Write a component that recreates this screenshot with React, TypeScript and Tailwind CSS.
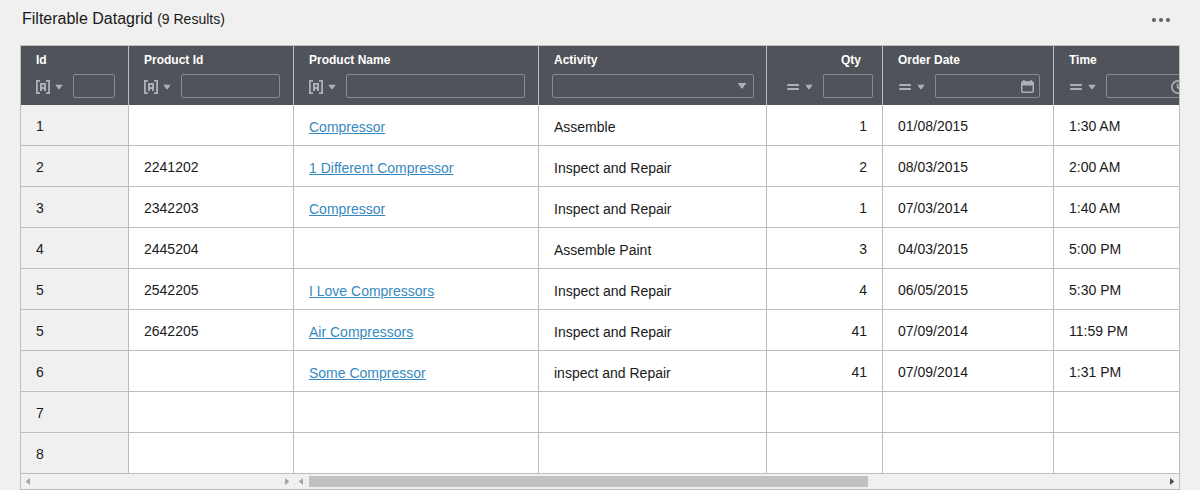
import React from "react";

type Row = {
  id: string;
  product?: string;
  name?: string;
  activity?: string;
  qty?: string;
  date?: string;
  time?: string;
};

const rows: Row[] = [
  { id: "1", name: "Compressor", activity: "Assemble", qty: "1", date: "01/08/2015", time: "1:30 AM" },
  { id: "2", product: "2241202", name: "1 Different Compressor", activity: "Inspect and Repair", qty: "2", date: "08/03/2015", time: "2:00 AM" },
  { id: "3", product: "2342203", name: "Compressor", activity: "Inspect and Repair", qty: "1", date: "07/03/2014", time: "1:40 AM" },
  { id: "4", product: "2445204", activity: "Assemble Paint", qty: "3", date: "04/03/2015", time: "5:00 PM" },
  { id: "5", product: "2542205", name: "I Love Compressors", activity: "Inspect and Repair", qty: "4", date: "06/05/2015", time: "5:30 PM" },
  { id: "5", product: "2642205", name: "Air Compressors", activity: "Inspect and Repair", qty: "41", date: "07/09/2014", time: "11:59 PM" },
  { id: "6", name: "Some Compressor", activity: "inspect and Repair", qty: "41", date: "07/09/2014", time: "1:31 PM" },
  { id: "7" },
  { id: "8" },
];

const grid = "grid grid-cols-[108px_165px_245px_228px_116px_171px_125px]";
const box = "h-6 shrink-0 rounded-[2px] border border-[#888b94]";

function Caret() {
  return (
    <svg className="ml-[5px] shrink-0" width="8" height="6" viewBox="0 0 8 6" fill="#adb0b8">
      <path d="M.2 .8h7.6L4.5 5.2h-1z" />
    </svg>
  );
}

function ContainsIcon() {
  return (
    <svg className="shrink-0" width="14" height="14" viewBox="0 0 14 14" fill="none" stroke="#adb0b8">
      <path strokeWidth="1.8" d="M4 .9H.9v12.2H4M10 .9h3.1v12.2H10" />
      <path strokeWidth="2" d="M5 11V4h4v7M5 8h4" />
    </svg>
  );
}

function EqualsIcon() {
  return (
    <svg className="mx-px shrink-0" width="12" height="6" viewBox="0 0 12 6" fill="#adb0b8">
      <rect width="12" height="2" rx=".4" />
      <rect y="4" width="12" height="2" rx=".4" />
    </svg>
  );
}

function CalendarIcon() {
  return (
    <svg className="mt-px" width="13" height="13" viewBox="0 0 13 13" fill="none" stroke="#adb0b8">
      <path strokeWidth="1.6" d="M3 0v3M10 0v3" />
      <rect x=".75" y="2" width="11.5" height="10.2" rx="1" strokeWidth="1.5" />
      <path strokeWidth="4" d="M.7 3.5h11.6" />
    </svg>
  );
}

function ClockIcon() {
  return (
    <svg className="mt-px" width="14" height="14" viewBox="0 0 14 14" fill="none" stroke="#adb0b8" strokeWidth="1.7">
      <circle cx="7" cy="7" r="6.1" />
      <path d="M6.6 3.5v3.8L9.4 9.5" />
    </svg>
  );
}

function HeaderCell({ title, right, last, children }: { title: string; right?: boolean; last?: boolean; children: React.ReactNode }) {
  return (
    <div className={`h-[59px] min-w-0 overflow-hidden bg-[#50535a] pt-1.5 ${last ? "" : "border-r border-[#bdbdbd]"}`}>
      <div className={`text-[12px] leading-4 font-bold text-white ${right ? "pr-[21px] text-right" : "pl-[15px]"}`}>{title}</div>
      <div className="mt-1.5 flex items-center">{children}</div>
    </div>
  );
}

function TextOperator() {
  return (
    <div className="flex shrink-0 items-center pt-[2px] pr-[10px] pl-[15px]">
      <ContainsIcon />
      <Caret />
    </div>
  );
}

function EqualsOperator({ number }: { number?: boolean }) {
  return (
    <div className={`flex shrink-0 items-center pt-[2px] pr-[10px] ${number ? "pl-[19px]" : "pl-[15px]"}`}>
      <EqualsIcon />
      <Caret />
    </div>
  );
}

function Cell({ children, className = "", last }: { children?: React.ReactNode; className?: string; last?: boolean }) {
  return (
    <div className={`h-[41px] min-w-0 overflow-hidden border-b border-[#bdbdbd] px-[15px] pt-[11px] leading-5 whitespace-nowrap ${last ? "" : "border-r"} ${className}`}>
      {children}
    </div>
  );
}

function ScrollArrow({ left, dark }: { left?: boolean; dark?: boolean }) {
  return (
    <svg className="shrink-0" width="4" height="7" viewBox="0 0 4 7" fill={dark ? "#505050" : "#a3a3a3"}>
      <path d={left ? "M4 0v7L0 3.8v-.6z" : "M0 0v7l4-3.2v-.6z"} />
    </svg>
  );
}

export default function App() {
  return (
    <div className="flex h-[490px] w-[1200px] flex-col overflow-hidden bg-[#f0f0f0] px-5 font-['Liberation_Sans',sans-serif] text-[14px] text-[#1a1a1a]">
      <header className="flex h-[45px] shrink-0 items-start justify-between pr-[10px] pl-[2px]">
        <h1 className="pt-[7px] text-[16px] leading-6">
          Filterable Datagrid <span className="text-[14px]">(9 Results)</span>
        </h1>
        <svg className="mt-[18px]" width="18" height="4" viewBox="0 0 18 4" fill="#606060">
          <circle cx="2" cy="2" r="2" />
          <circle cx="9" cy="2" r="2" />
          <circle cx="16" cy="2" r="2" />
        </svg>
      </header>

      <main className="h-[445px] w-[1160px] overflow-hidden border border-[#bdbdbd]">
        <div className={grid}>
          <HeaderCell title="Id">
            <TextOperator />
            <div className={`${box} w-[42px]`} />
          </HeaderCell>
          <HeaderCell title="Product Id">
            <TextOperator />
            <div className={`${box} w-[99px]`} />
          </HeaderCell>
          <HeaderCell title="Product Name">
            <TextOperator />
            <div className={`${box} w-[179px]`} />
          </HeaderCell>
          <HeaderCell title="Activity">
            <div className={`${box} ml-[13px] flex w-[202px] items-center justify-end pr-[6px]`}>
              <svg width="10" height="6" viewBox="0 0 10 6" fill="#adb0b8">
                <path d="M.6 0h8.8L5.5 5.6h-1z" />
              </svg>
            </div>
          </HeaderCell>
          <HeaderCell title="Qty" right>
            <EqualsOperator number />
            <div className={`${box} w-[50px]`} />
          </HeaderCell>
          <HeaderCell title="Order Date">
            <EqualsOperator />
            <div className={`${box} flex w-[105px] items-center justify-end pr-[5px]`}>
              <CalendarIcon />
            </div>
          </HeaderCell>
          <HeaderCell title="Time" last>
            <EqualsOperator />
            <div className={`${box} flex w-[85px] items-center justify-end pr-[5px]`}>
              <ClockIcon />
            </div>
          </HeaderCell>
        </div>

        {rows.map((row, i) => (
          <div key={i} className={`${grid} bg-white`}>
            <Cell className="bg-[#f0f0f0]">{row.id}</Cell>
            <Cell>{row.product}</Cell>
            <Cell className="pt-[12px]">
              {row.name && <a className="text-[#368ac0] underline">{row.name}</a>}
            </Cell>
            <Cell className="pt-[12px]">{row.activity}</Cell>
            <Cell className="text-right">{row.qty}</Cell>
            <Cell>{row.date}</Cell>
            <Cell last>{row.time}</Cell>
          </div>
        ))}

        <div className="flex h-[15px] items-center bg-[#f0f0f0]">
          <div className="flex w-[273px] shrink-0 items-center justify-between pr-[5px] pl-[5px]">
            <ScrollArrow left />
            <ScrollArrow />
          </div>
          <div className="flex grow items-center pr-[5px] pl-[5px]">
            <ScrollArrow left />
            <div className="ml-[6px] h-[11px] w-[559px] bg-[#c1c1c1]" />
            <div className="grow" />
            <ScrollArrow dark />
          </div>
        </div>
      </main>
    </div>
  );
}
